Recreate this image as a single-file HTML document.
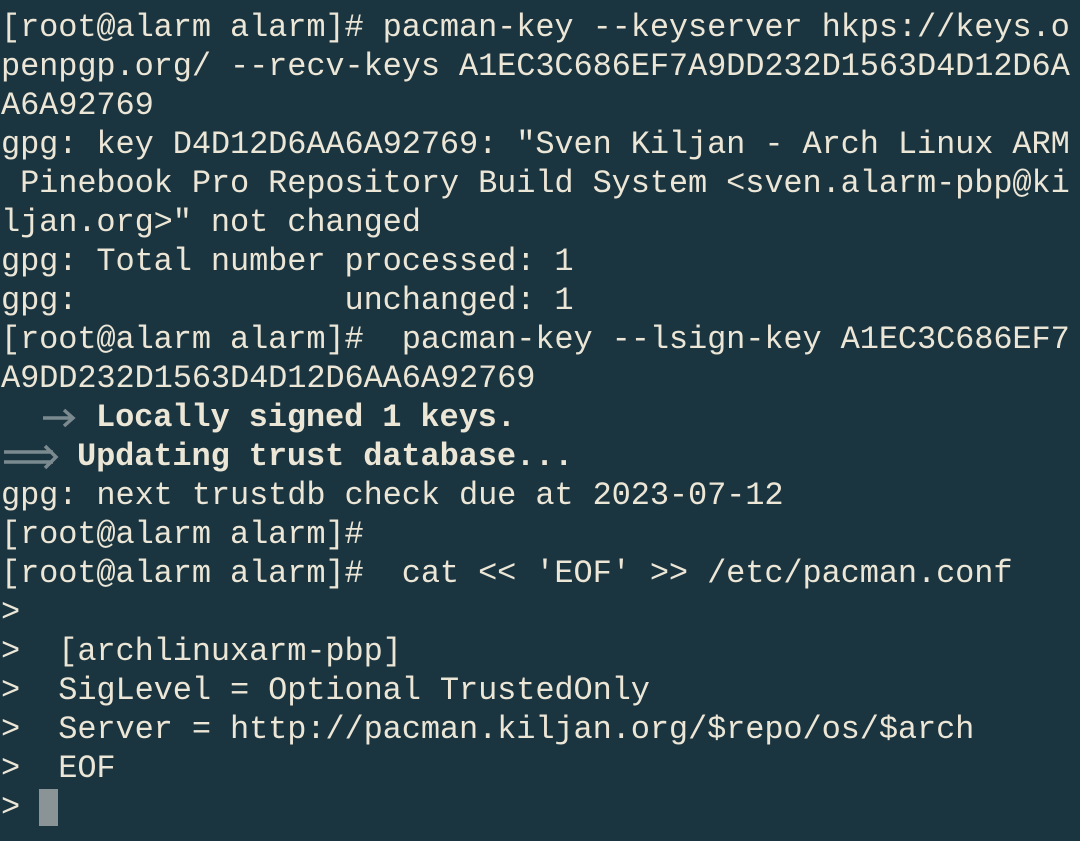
<html><head><style>
body{margin:0;background:#1a3440;width:1080px;height:841px;overflow:hidden}
pre{margin:0;position:absolute;top:8px;left:1px;font-family:"Liberation Mono",monospace;font-size:32px;line-height:39px;color:#ece6d6;letter-spacing:-0.12px}
.b{font-weight:bold}
.a{display:inline-block;height:39px;vertical-align:top}
.c{display:inline-block;width:19px;height:37px;background:#8a9496;vertical-align:top;margin-top:1px}
</style></head><body><pre>[root@alarm alarm]# pacman-key --keyserver hkps://keys.o
penpgp.org/ --recv-keys A1EC3C686EF7A9DD232D1563D4D12D6A
A6A92769
gpg: key D4D12D6AA6A92769: "Sven Kiljan - Arch Linux ARM
 Pinebook Pro Repository Build System &lt;sven.alarm-pbp@ki
ljan.org&gt;" not changed
gpg: Total number processed: 1
gpg:              unchanged: 1
[root@alarm alarm]#  pacman-key --lsign-key A1EC3C686EF7
A9DD232D1563D4D12D6AA6A92769
<span class="a" style="width:95px"><svg width="95" height="39"><path d="M42 20H72M63 12L72 20L63 28" stroke="#7b8a8f" stroke-width="3.5" fill="none"/></svg></span><span class="b">Locally signed 1 keys.</span>
<span class="a" style="width:76px"><svg width="76" height="39"><path d="M3 15H52M3 25H52M44 9L55 20L44 31" stroke="#7b8a8f" stroke-width="3.5" fill="none"/></svg></span><span class="b">Updating trust database...</span>
gpg: next trustdb check due at 2023-07-12
[root@alarm alarm]#
[root@alarm alarm]#  cat &lt;&lt; 'EOF' &gt;&gt; /etc/pacman.conf
&gt;
&gt;  [archlinuxarm-pbp]
&gt;  SigLevel = Optional TrustedOnly
&gt;  Server = http://pacman.kiljan.org/$repo/os/$arch
&gt;  EOF
&gt; <span class="c"></span></pre></body></html>
